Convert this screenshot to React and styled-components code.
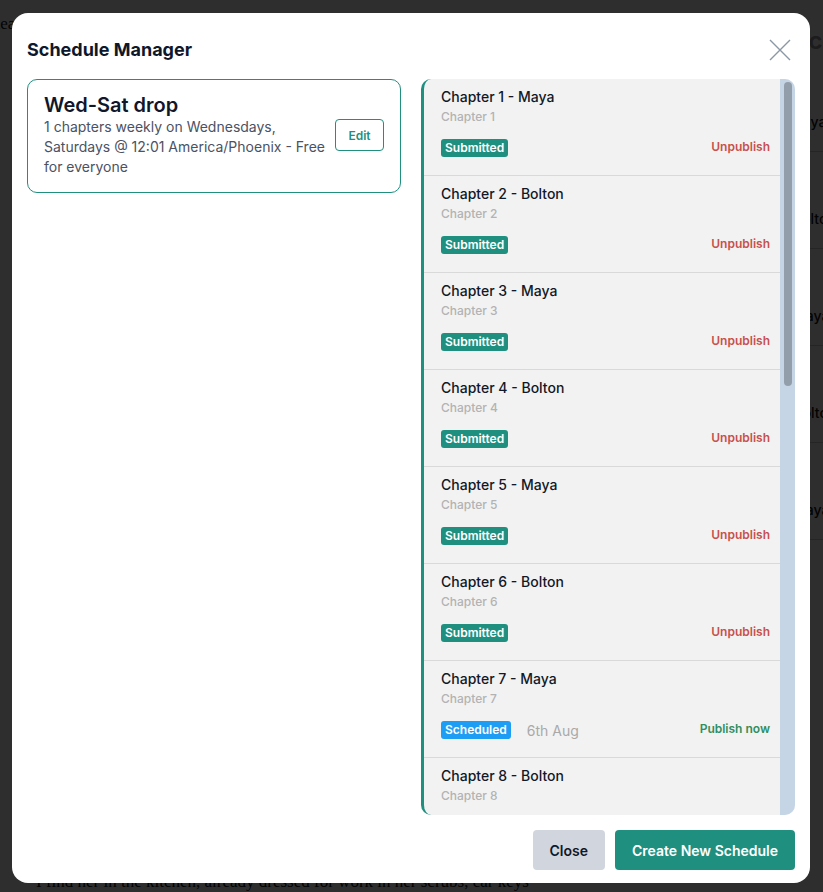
import React from 'react';
import styled, { createGlobalStyle } from 'styled-components';

const GlobalStyle = createGlobalStyle`
  html, body {
    margin: 0;
    padding: 0;
    height: 100%;
    background: #ffffff;
  }
  * { box-sizing: border-box; }
`;

const Page = styled.div`
  display: flex;
  min-height: 892px;
  overflow: hidden;
  font-family: 'Liberation Serif', serif;
  color: #111;
`;

const Story = styled.div`
  flex: 1;
  display: flex;
  flex-direction: column;
  justify-content: space-between;
  padding: 14px 0 0 0;
  font-size: 17px;

  p {
    margin: 0;
    padding-left: 36px;
    white-space: nowrap;
  }
  .top {
    margin-left: -50px;
  }
`;

const SidePanel = styled.div`
  width: 110px;
  flex-shrink: 0;
  padding: 26px 0 0 0;
  font-family: 'Inter', sans-serif;
  overflow: hidden;

  h3 {
    margin: 0;
    height: 29px;
    font-size: 24px;
    color: #999;
    font-weight: 600;
    padding-left: 80px;
  }
`;

const SideItem = styled.div`
  height: 97px;
  font-size: 14px;
  font-weight: 500;
  white-space: nowrap;
  border-bottom: 1px solid #ccc;
  padding-top: 58px;
`;

const Overlay = styled.div`
  position: fixed;
  inset: 0;
  background: rgba(0, 0, 0, 0.82);
`;

const Modal = styled.div`
  position: fixed;
  left: 12px;
  top: 13px;
  width: 798px;
  height: 870px;
  background: #ffffff;
  border-radius: 16px;
  display: flex;
  flex-direction: column;
  padding: 0 15px 13px;
  font-family: 'Inter', sans-serif;
  color: #111827;
`;

const Header = styled.div`
  display: flex;
  align-items: center;
  justify-content: space-between;
  padding-top: 26px;
  margin-bottom: 18px;

  h2 {
    margin: 0;
    font-size: 18px;
    line-height: 22px;
    font-weight: 700;
    color: #0f172a;
  }
`;

const CloseIcon = styled.button`
  border: 0;
  background: none;
  padding: 0;
  width: 22px;
  height: 22px;
  margin-right: 4px;
  cursor: pointer;
  display: flex;
`;

const Body = styled.div`
  flex: 1;
  min-height: 0;
  display: grid;
  grid-template-columns: 1fr 1fr;
  gap: 20px;
`;

const ScheduleCard = styled.div`
  align-self: start;
  border: 1px solid #1f8f80;
  border-radius: 10px;
  padding: 13px 16px 15px;
  display: flex;
  align-items: center;
  gap: 10px;
`;

const CardText = styled.div`
  flex: 1;

  h4 {
    margin: 0;
    font-size: 20px;
    line-height: 24px;
    font-weight: 600;
    color: #0f172a;
  }
  p {
    margin: 0;
    font-size: 14px;
    line-height: 20px;
    color: #4b5263;
  }
`;

const OutlineButton = styled.button`
  width: 49px;
  height: 32px;
  border: 1px solid #1f8f80;
  border-radius: 4px;
  background: #fff;
  color: #1f8f80;
  font-family: 'Inter', sans-serif;
  font-size: 12px;
  font-weight: 600;
  flex-shrink: 0;
`;

const ChapterPanel = styled.div`
  display: flex;
  min-height: 0;
  background: #f2f2f2;
  border-left: 3px solid #1f8f80;
  border-radius: 10px;
  overflow: hidden;
`;

const ChapterList = styled.div`
  flex: 1;
  min-width: 0;
  overflow: hidden;
`;

const ScrollTrack = styled.div`
  width: 15px;
  flex-shrink: 0;
  background: #c5d5e6;
  padding: 3px 3px 0 4px;
`;

const ScrollThumb = styled.div`
  height: ${p => p.$size}px;
  background: #939eab;
  border-radius: 4px;
`;

const ChapterItem = styled.div`
  padding: 8px 10px 16px 17px;
  border-bottom: 1px solid #d9d9d9;
`;

const ChapterTitle = styled.div`
  font-size: 14px;
  line-height: 20px;
  font-weight: 500;
  color: #111827;
`;

const ChapterSub = styled.div`
  font-size: 12px;
  line-height: 20px;
  font-weight: 500;
  color: #b3b3b3;
`;

const StatusRow = styled.div`
  margin-top: 10px;
  height: 22px;
  display: flex;
  align-items: center;
  gap: 16px;
`;

const Badge = styled.span`
  background: ${p => (p.$kind === 'scheduled' ? '#1e9df5' : '#1f8f80')};
  color: #fff;
  font-size: 12px;
  font-weight: 600;
  line-height: 18px;
  padding: 0 4px;
  border-radius: 3px;
`;

const DateText = styled.span`
  font-size: 14px;
  color: #a9a9a9;
`;

const Action = styled.button`
  margin-left: auto;
  margin-bottom: 3px;
  border: 0;
  background: none;
  padding: 0;
  font-family: 'Inter', sans-serif;
  font-size: 12px;
  line-height: 16px;
  font-weight: 600;
  color: ${p => (p.$kind === 'publish' ? '#2f8f62' : '#c8504c')};
`;

const Footer = styled.div`
  display: flex;
  justify-content: flex-end;
  gap: 10px;
  padding-top: 15px;
`;

const FooterButton = styled.button`
  height: 40px;
  border: 0;
  border-radius: 4px;
  padding: 0 17px;
  font-family: 'Inter', sans-serif;
  font-size: 14px;
  font-weight: 600;
  background: ${p => (p.$primary ? '#1f8f80' : '#d1d5de')};
  color: ${p => (p.$primary ? '#ffffff' : '#111827')};
`;

const dates = [
  '6th Aug', '9th Aug', '13th Aug', '16th Aug', '20th Aug', '23rd Aug',
  '27th Aug', '30th Aug', '3rd Sep', '6th Sep', '10th Sep', '13th Sep',
];

const chapters = Array.from({ length: 18 }, (_, i) => ({
  n: i + 1,
  who: i % 2 === 0 ? 'Maya' : 'Bolton',
  submitted: i < 6,
  date: i >= 6 ? dates[i - 6] : null,
}));

export default function App() {
  return (
    <>
      <GlobalStyle />
      <Page>
        <Story>
          <p className="top">Idea</p>
          <p>I find her in the kitchen, already dressed for work in her scrubs, car keys</p>
        </Story>
        <SidePanel>
          <h3>Schedules</h3>
          {chapters.slice(0, 5).map(c => (
            <SideItem key={c.n}>Chapter {c.n} - {c.who}</SideItem>
          ))}
        </SidePanel>
      </Page>
      <Overlay />
      <Modal>
        <Header>
          <h2>Schedule Manager</h2>
          <CloseIcon aria-label="Close">
            <svg width="22" height="22" viewBox="0 0 22 22">
              <path d="M1 1L21 21M21 1L1 21" stroke="#8b97a5" strokeWidth="1.4" fill="none" />
            </svg>
          </CloseIcon>
        </Header>
        <Body>
          <ScheduleCard>
            <CardText>
              <h4>Wed-Sat drop</h4>
              <p>1 chapters weekly on Wednesdays, Saturdays @ 12:01 America/Phoenix - Free for everyone</p>
            </CardText>
            <OutlineButton>Edit</OutlineButton>
          </ScheduleCard>
          <ChapterPanel>
            <ChapterList>
              {chapters.map(c => (
                <ChapterItem key={c.n}>
                  <ChapterTitle>Chapter {c.n} - {c.who}</ChapterTitle>
                  <ChapterSub>Chapter {c.n}</ChapterSub>
                  <StatusRow>
                    {c.submitted ? (
                      <>
                        <Badge>Submitted</Badge>
                        <Action>Unpublish</Action>
                      </>
                    ) : (
                      <>
                        <Badge $kind="scheduled">Scheduled</Badge>
                        <DateText>{c.date}</DateText>
                        <Action $kind="publish">Publish now</Action>
                      </>
                    )}
                  </StatusRow>
                </ChapterItem>
              ))}
            </ChapterList>
            <ScrollTrack>
              <ScrollThumb $size={304} />
            </ScrollTrack>
          </ChapterPanel>
        </Body>
        <Footer>
          <FooterButton>Close</FooterButton>
          <FooterButton $primary>Create New Schedule</FooterButton>
        </Footer>
      </Modal>
    </>
  );
}
